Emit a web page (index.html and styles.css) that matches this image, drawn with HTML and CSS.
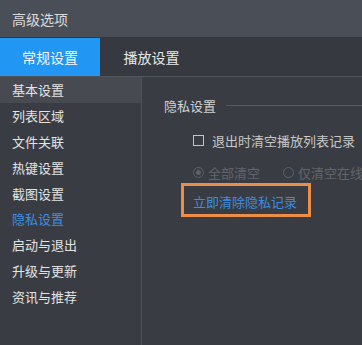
FILE: index.html
```html
<!DOCTYPE html>
<html lang="zh-CN">
<head>
    <meta charset="UTF-8">
    <title>高级选项</title>
    <link rel="stylesheet" href="styles.css">
</head>
<body>
    <div class="window">
        <div class="titlebar">高级选项</div>

        <div class="tabs">
            <div class="tab active">常规设置</div>
            <div class="tab">播放设置</div>
        </div>

        <div class="content">
            <ul class="sidebar">
                <li class="selected">基本设置</li>
                <li>列表区域</li>
                <li>文件关联</li>
                <li>热键设置</li>
                <li>截图设置</li>
                <li class="current">隐私设置</li>
                <li>启动与退出</li>
                <li>升级与更新</li>
                <li>资讯与推荐</li>
            </ul>

            <div class="main">
                <div class="group">
                    <div class="group-title"><span>隐私设置</span></div>

                    <label class="option">
                        <span class="checkbox"></span>
                        退出时清空播放列表记录
                    </label>

                    <div class="option radios disabled">
                        <span class="radio-item"><span class="radio checked"></span>全部清空</span>
                        <span class="radio-item"><span class="radio"></span>仅清空在线记录</span>
                    </div>

                    <div class="clear-box">
                        <a class="clear-link">立即清除隐私记录</a>
                    </div>
                </div>
            </div>
        </div>
    </div>
</body>
</html>
```

FILE: styles.css
```css
* { box-sizing: border-box; }
html, body { margin: 0; padding: 0; }
body { width: 362px; height: 345px; overflow: hidden; background: #393c43; font-family: "Noto Sans CJK SC", "Noto Sans", sans-serif; }

.window { display: flex; flex-direction: column; height: 345px; }

.titlebar { height: 38px; line-height: 38px; padding-left: 12px; background: #4a4e56; color: #dcdcdc; font-size: 14px; border-bottom: 1px solid #33363c; }

.tabs { display: flex; height: 39px; background: #363940; border-bottom: 1px solid #50545b; }
.tab { width: 100px; line-height: 38px; text-align: center; color: #e8e8e8; font-size: 14px; }
.tab + .tab { width: 103px; }
.tab.active { background: #2196f3; color: #f4f8fc; }

.content { flex: 1; display: flex; min-height: 0; }

.sidebar { list-style: none; margin: 0; padding: 0; flex: none; width: 142px; border-right: 1px solid #4d5158; }
.sidebar li { height: 25.9px; line-height: 25px; padding-left: 12px; color: #e4e4e4; font-size: 13px; }
.sidebar li.selected { background: #474a51; }
.sidebar li.current { color: #3d8ee0; }

.main { flex: 1; min-width: 0; overflow: hidden; padding: 18px 0 0 22px; }

.group-title { display: flex; align-items: center; color: #d2d2d2; font-size: 13px; height: 20px; }
.group-title::after { content: ""; flex: 1; height: 1px; margin-left: 10px; background: #54585f; }

.option { display: flex; align-items: center; height: 20px; font-size: 13px; color: #c8c8c8; white-space: nowrap; }
label.option { margin: 15px 0 0 29px; }
.checkbox { flex: none; width: 11px; height: 11px; border: 1px solid #c4c4c4; margin-right: 8px; }

.radios { margin: 12px 0 0 29px; color: #62656b; }
.radio-item { display: inline-flex; align-items: center; margin-right: 23px; }
.radio { flex: none; width: 11px; height: 11px; border: 1px solid #5e6167; border-radius: 50%; margin-right: 4px; position: relative; }
.radio.checked::after { content: ""; position: absolute; left: 2px; top: 2px; width: 5px; height: 5px; border-radius: 50%; background: #5e6167; }

.clear-box { display: inline-block; margin: 1px 0 0 17px; width: 130px; height: 34px; border: 3px solid #ec8e48; padding-left: 9px; line-height: 28px; }
.clear-link { color: #3a8de0; font-size: 13px; }
```
